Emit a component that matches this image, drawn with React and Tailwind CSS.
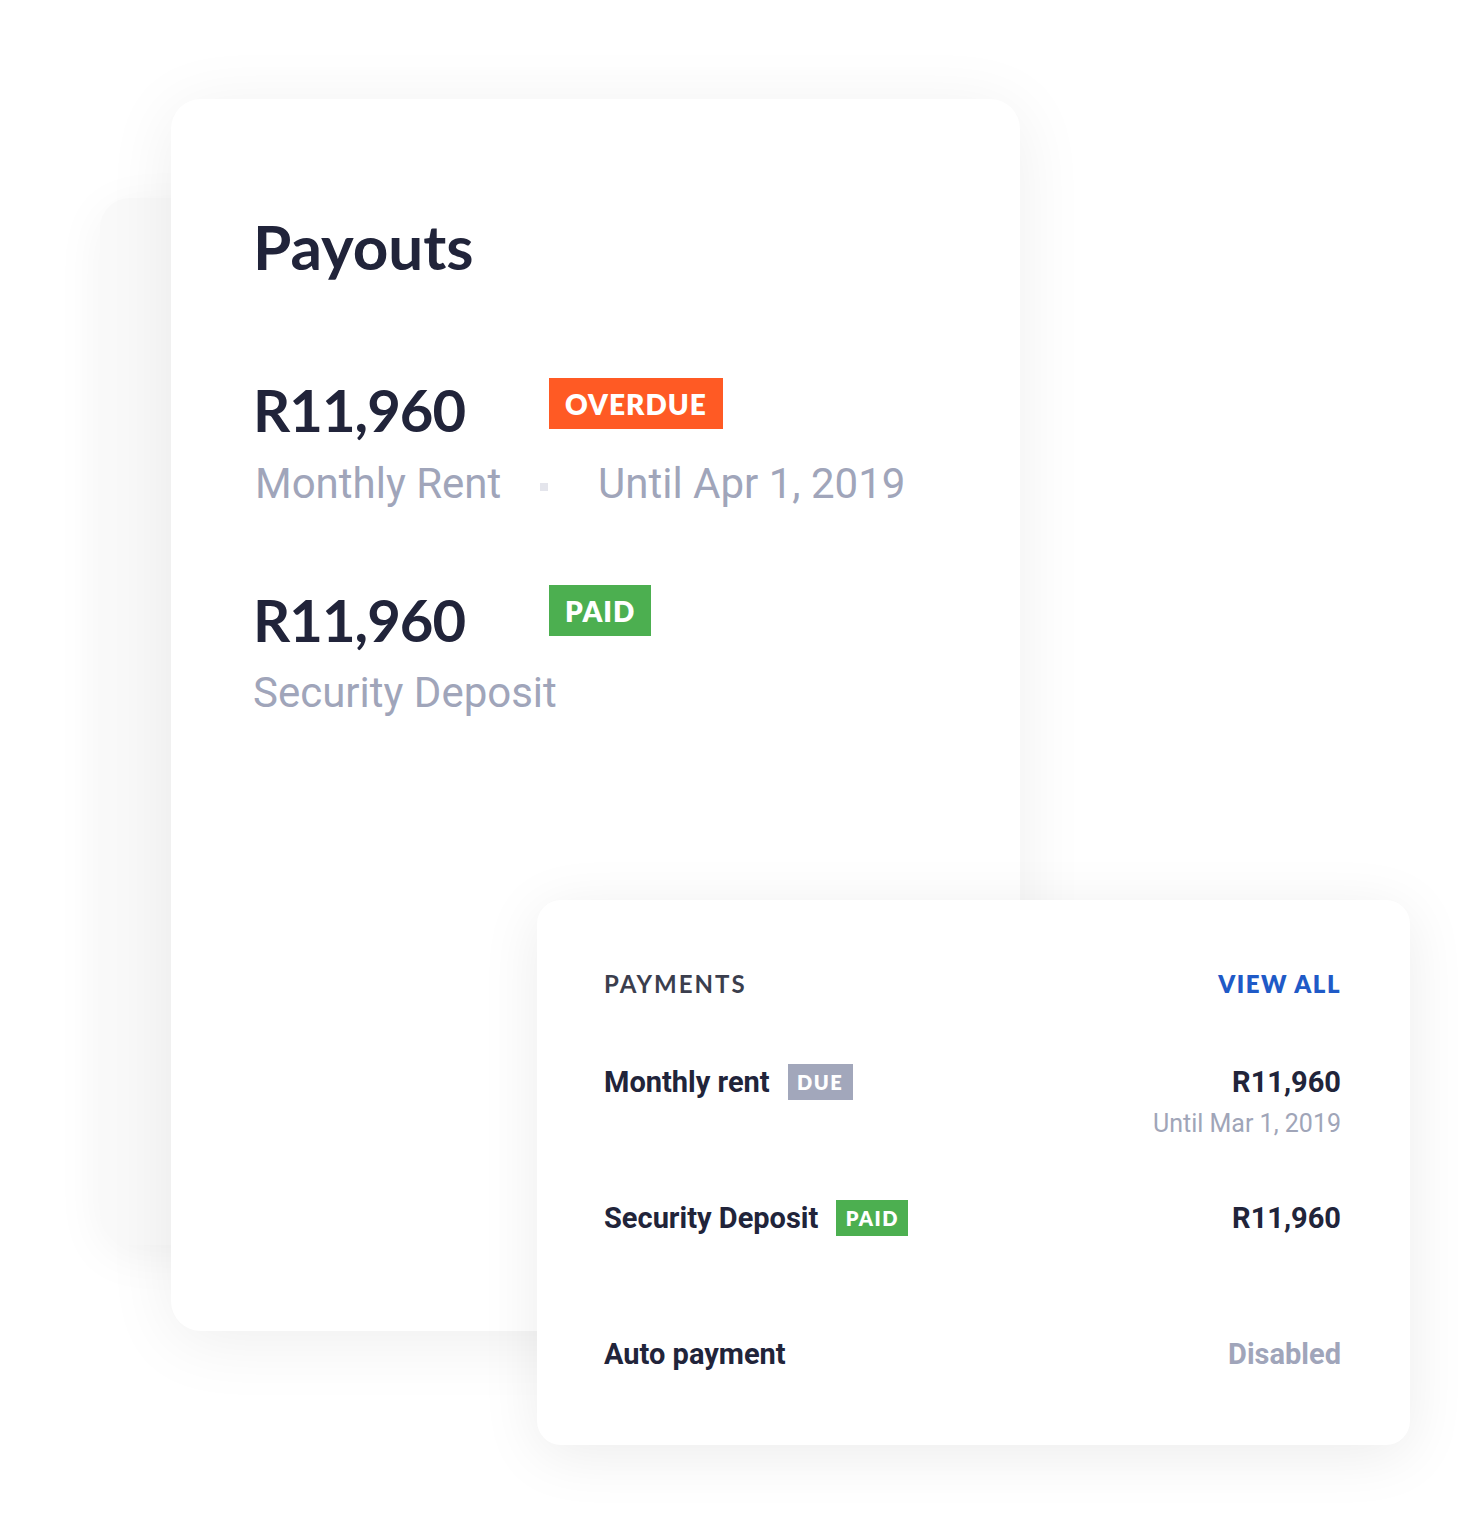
import React from "react";

function Badge({ children, className }) {
  return (
    <div
      className={
        "flex items-center justify-center text-white font-[Lato,sans-serif] font-extrabold leading-none " +
        className
      }
    >
      {children}
    </div>
  );
}

export default function App() {
  return (
    <div className="relative w-[1479px] h-[1515px] bg-white overflow-hidden">
      {/* back card */}
      <div className="absolute left-[100px] top-[198px] w-[320px] h-[1047px] rounded-[30px] bg-[#f9f9f9] shadow-[0_10px_50px_rgba(0,0,0,0.05)]" />

      {/* main card */}
      <div className="relative ml-[171px] mt-[99px] w-[849px] h-[1232px] rounded-[30px] bg-white shadow-[0_10px_70px_rgba(0,0,0,0.07)] pl-[82px] pt-[116px]">
        <h1 className="font-[Lato,sans-serif] font-bold text-[62px] leading-none text-[#21243a]">
          Payouts
        </h1>

        <div className="mt-[104px] flex items-start">
          <div className="w-[296px] font-[Lato,sans-serif] font-bold text-[58px] leading-none tracking-[-1px] text-[#21243a]">
            R11,960
          </div>
          <Badge className="-mt-[3px] h-[51px] px-[16px] bg-[#ff5a24] text-[28px] tracking-[1px]">
            OVERDUE
          </Badge>
        </div>

        <div className="mt-[24px] flex items-center font-[Roboto,sans-serif] text-[42px] leading-none text-[#a0a5ba]">
          <div className="w-[287px] pl-[2px]">Monthly Rent</div>
          <div className="w-[8px] h-[8px] bg-[#e4e5ec] mt-[6px]" />
          <div className="ml-[50px]">Until Apr 1, 2019</div>
        </div>

        <div className="mt-[86px] flex items-start">
          <div className="w-[296px] font-[Lato,sans-serif] font-bold text-[58px] leading-none tracking-[-1px] text-[#21243a]">
            R11,960
          </div>
          <Badge className="-mt-[6px] h-[51px] px-[16px] bg-[#4caf50] text-[28px] tracking-[1px]">
            PAID
          </Badge>
        </div>

        <div className="mt-[23px] font-[Roboto,sans-serif] text-[42px] leading-none text-[#a0a5ba]">
          Security Deposit
        </div>
      </div>

      {/* payments card */}
      <div className="absolute left-[537px] top-[900px] w-[873px] h-[545px] rounded-[24px] bg-white shadow-[0_10px_60px_rgba(0,0,0,0.08)] pl-[67px] pr-[69px] pt-[72px]">
        <div className="flex items-start justify-between font-[Lato,sans-serif] text-[24px] leading-none">
          <div className="font-bold tracking-[2px] text-[#3b3e4d]">PAYMENTS</div>
          <div className="font-extrabold tracking-[1.5px] text-[#1f5ac7]">VIEW ALL</div>
        </div>

        <div className="mt-[68px] flex items-center justify-between font-[Roboto,sans-serif] text-[29px] leading-none">
          <div className="flex items-center">
            <span className="font-bold text-[#21243a]">Monthly rent</span>
            <Badge className="ml-[18px] h-[36px] w-[65px] bg-[#a2a7bb] text-[20px] tracking-[1.5px]">
              DUE
            </Badge>
          </div>
          <span className="font-bold text-[#21243a]">R11,960</span>
        </div>
        <div className="mt-[11px] text-right font-[Roboto,sans-serif] text-[25px] leading-none text-[#a0a5b8]">
          Until Mar 1, 2019
        </div>

        <div className="mt-[64px] flex items-center justify-between font-[Roboto,sans-serif] text-[29px] leading-none">
          <div className="flex items-center">
            <span className="font-bold text-[#21243a]">Security Deposit</span>
            <Badge className="ml-[18px] h-[36px] w-[72px] bg-[#4caf50] text-[20px] tracking-[1.5px]">
              PAID
            </Badge>
          </div>
          <span className="font-bold text-[#21243a]">R11,960</span>
        </div>

        <div className="mt-[104px] flex items-center justify-between font-[Roboto,sans-serif] text-[29px] leading-none">
          <span className="font-bold text-[#21243a]">Auto payment</span>
          <span className="font-bold text-[#a0a5ba]">Disabled</span>
        </div>
      </div>
    </div>
  );
}
